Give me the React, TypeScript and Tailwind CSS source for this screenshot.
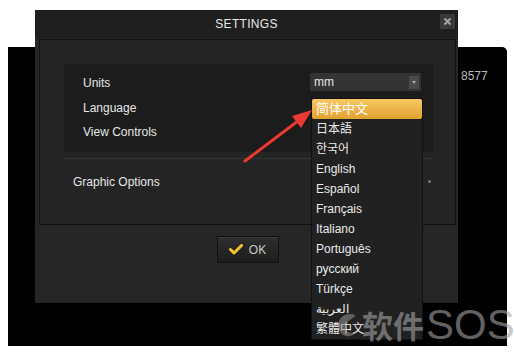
const LANGS = [
  "简体中文",
  "日本語",
  "한국어",
  "English",
  "Español",
  "Français",
  "Italiano",
  "Português",
  "русский",
  "Türkçe",
  "العربية",
  "繁體中文",
];

const FONT = "font-['Liberation_Sans','Noto_Sans_CJK_SC',sans-serif]";

const Row = ({ label }: { label: string }) => (
  <div className="h-[24.5px] flex items-center text-[12px] text-[#e6e6e6]">{label}</div>
);

const App = () => {
  return (
    <div className={`relative w-[514px] h-[354px] bg-white overflow-hidden ${FONT}`}>
      {/* window behind */}
      <div className="absolute left-[8px] top-[47px] w-[499px] h-[299px] bg-black rounded-tr-[5px]">
        <span className="absolute left-[453px] top-[20px] text-[12px] text-[#bdbdbd]">8577</span>
      </div>

      {/* settings dialog */}
      <div className="absolute left-[35px] top-[10px] w-[423px] h-[293px] bg-[#262626] flex flex-col">
        <div className="relative h-[28px] bg-[#1f1f1f] flex items-center justify-center shrink-0">
          <span className="text-[12px] text-[#e8e8e8] tracking-[0.3px]">SETTINGS</span>
          <div className="absolute right-[3px] top-[4px] w-[15px] h-[15px] bg-[#3a3a3a] flex items-center justify-center">
            <svg width="9" height="9" viewBox="0 0 9 9">
              <path d="M1.5 1.5 L7.5 7.5 M7.5 1.5 L1.5 7.5" stroke="#a8a8a8" strokeWidth="1.8" />
            </svg>
          </div>
        </div>

        <div className="ml-[4px] mr-[2px] mt-[1px] h-[186px] border border-[#121212] bg-[#242424] pt-[24px] pl-[24px] pr-[22px]">
          <div className="h-[88px] bg-[#1c1c1c] flex justify-between pl-[19px] pr-[12px] pt-[7px]">
            <div className="flex flex-col">
              <Row label="Units" />
              <Row label="Language" />
              <Row label="View Controls" />
            </div>
            <div className="mt-[2px] w-[111px] h-[18px] bg-[#343434] flex items-center justify-between pl-[4px] pr-[2px]">
              <span className="text-[12px] text-[#e6e6e6]">mm</span>
              <div className="w-[10px] h-[13px] bg-[#4a4a4a] flex items-center justify-center">
                <div className="w-0 h-0 border-l-[2px] border-r-[2px] border-t-[3px] border-l-transparent border-r-transparent border-t-[#aaa]" />
              </div>
            </div>
          </div>
          <div className="mt-[6px] h-px bg-[#343434]" />
          <div className="mt-[14px] pl-[9px] flex justify-between pr-[2px]">
            <span className="text-[12px] text-[#e6e6e6]">Graphic Options</span>
            <span className="w-[3px] h-[3px] mt-[7px] bg-[#777] rounded-full" />
          </div>
        </div>

        <div className="flex justify-center mt-[11px] pl-[2px]">
          <div className="w-[62px] h-[27px] bg-gradient-to-b from-[#2e2e2e] to-[#1d1d1d] border border-[#111] shadow-[inset_0_1px_0_#3a3a3a] flex items-center justify-center gap-[6px]">
            <svg width="14" height="11" viewBox="0 0 14 11">
              <path d="M1.5 5.5 L5 9 L12.5 1.5" stroke="#f2c230" strokeWidth="3" fill="none" strokeLinecap="round" strokeLinejoin="round" />
            </svg>
            <span className="text-[12px] text-[#c8c8c8]">OK</span>
          </div>
        </div>
      </div>

      {/* language dropdown list */}
      <div className="absolute left-[311px] top-[98px] w-[112px] h-[242px] bg-[#212121] border border-[#111] flex flex-col">
        {LANGS.map((l, i) => (
          <div
            key={l}
            className={
              i === 0
                ? "h-[20px] shrink-0 flex items-center pl-[4px] text-[13px] text-white bg-gradient-to-b from-[#f6c862] to-[#e2a22f] rounded-[2px]"
                : "h-[20px] shrink-0 flex items-center pl-[4px] text-[12px] text-[#eaeaea]"
            }
          >
            {l}
          </div>
        ))}
      </div>

      {/* red annotation arrow */}
      <svg className="absolute left-0 top-0" width="514" height="354" viewBox="0 0 514 354">
        <path d="M245 161 L298 121" stroke="#ea3a32" strokeWidth="3" strokeLinecap="round" />
        <polygon points="312,110 301,128 292,116" fill="#ea3a32" />
      </svg>

      {/* watermark */}
      <div className="absolute left-[334px] top-[305px] flex items-center gap-[2px] whitespace-nowrap pointer-events-none">
        <svg width="26" height="38" viewBox="0 0 24 34">
          <path d="M20 8 C10 4 2 12 4 20 C6 28 16 30 20 24 C12 26 8 20 12 15 C14 12 18 11 20 8 Z" fill="rgba(150,150,150,0.55)" />
        </svg>
        <span className="text-[31px] leading-[40px] font-bold text-[rgba(165,165,165,0.6)] font-['Noto_Sans_CJK_SC',sans-serif]">
          软件
        </span>
        <span className="text-[42px] leading-[40px] text-[rgba(165,165,165,0.6)] font-['Liberation_Sans',sans-serif]">
          SOS
        </span>
      </div>
    </div>
  );
};

export default App;
